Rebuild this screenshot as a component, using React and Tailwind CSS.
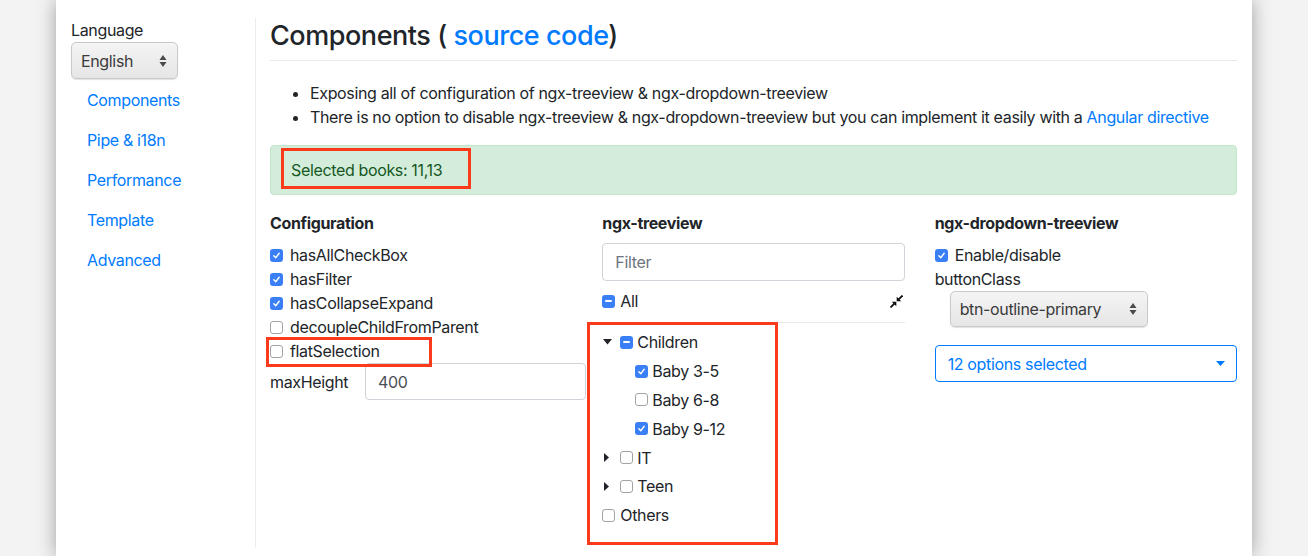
import React from 'react';

const FONT = { fontFamily: 'Inter, "Liberation Sans", sans-serif' };

function Check({ state = 'off' }) {
  if (state === 'on') {
    return (
      <span className="inline-flex items-center justify-center w-[13px] h-[13px] rounded-[3px] bg-[#3a7ff6] shrink-0">
        <svg width="9" height="9" viewBox="0 0 10 10">
          <path d="M2 5.2 L4.2 7.5 L8 2.5" fill="none" stroke="#fff" strokeWidth="1.5" strokeLinecap="round" strokeLinejoin="round" />
        </svg>
      </span>
    );
  }
  if (state === 'mixed') {
    return (
      <span className="inline-flex items-center justify-center w-[13px] h-[13px] rounded-[3px] bg-[#3a7ff6] shrink-0">
        <span className="block w-[7px] h-[2px] bg-white rounded-sm" />
      </span>
    );
  }
  return <span className="inline-block w-[13px] h-[13px] rounded-[3px] border border-[#a3a3a3] bg-white shrink-0" />;
}

function Caret({ dir }) {
  return dir === 'down' ? (
    <svg width="9" height="6" viewBox="0 0 9 6" className="shrink-0"><path d="M0 0 H9 L4.5 5.5 Z" fill="#212529" /></svg>
  ) : (
    <svg width="6" height="9" viewBox="0 0 6 9" className="shrink-0"><path d="M0 0 V9 L5 4.5 Z" fill="#212529" /></svg>
  );
}

function UpDown() {
  return (
    <svg width="8" height="14" viewBox="0 0 8 14">
      <path d="M4 1 L7.5 6 H0.5 Z" fill="#4a4a4a" />
      <path d="M4 13 L7.5 8 H0.5 Z" fill="#4a4a4a" />
    </svg>
  );
}

function MacSelect({ label, className }) {
  return (
    <div className={`flex items-center justify-between rounded-[5px] border border-[#c9c9c9] bg-gradient-to-b from-[#f4f4f4] to-[#e6e6e6] shadow-[0_1px_1px_rgba(0,0,0,0.12)] pl-[9px] pr-[10px] text-[#3a3a3a] ${className}`}>
      <span>{label}</span>
      <UpDown />
    </div>
  );
}

const CONFIG = [
  ['hasAllCheckBox', 'on'],
  ['hasFilter', 'on'],
  ['hasCollapseExpand', 'on'],
  ['decoupleChildFromParent', 'off'],
  ['flatSelection', 'off'],
];

export default function App() {
  return (
    <div style={FONT} className="w-[1308px] h-[556px] overflow-hidden bg-[#f3f3f3] flex justify-center text-[16px] tracking-[-0.35px] text-[#212529]">
      <div className="w-[1196px] h-full bg-white shadow-[0_0_18px_rgba(0,0,0,0.35)] flex pt-[18px]">
        {/* Sidebar */}
        <aside className="w-[200px] h-[530px] border-r border-[#ececec] pl-[15px] shrink-0">
          <div className="leading-6">Language</div>
          <MacSelect label="English" className="w-[107px] h-[37px]" />
          <nav className="flex flex-col text-[#007bff] mt-px">
            {['Components', 'Pipe & i18n', 'Performance', 'Template', 'Advanced'].map(n => (
              <a key={n} className="px-4 py-2 leading-6">{n}</a>
            ))}
          </nav>
        </aside>

        {/* Main */}
        <main className="flex-1 pl-[14px] pr-[15px]">
          <h3 className="text-[27px] font-medium leading-[35px] tracking-[-0.45px]">
            Components ( <a className="text-[#007bff]">source code</a>)
          </h3>
          <hr className="mt-[7px] border-[#e9e9e9]" />
          <ul className="list-disc pl-10 mt-[20px] leading-6">
            <li>Exposing all of configuration of ngx-treeview &amp; ngx-dropdown-treeview</li>
            <li>
              There is no option to disable ngx-treeview &amp; ngx-dropdown-treeview but you can implement it easily with a{' '}
              <a className="text-[#007bff]">Angular directive</a>
            </li>
          </ul>

          <div className="relative mt-4 h-[50px] rounded-[4px] border border-[#c3e6cb] bg-[#d4edda] text-[#155724] px-5 flex items-center">
            Selected books: 11,13
            <span className="absolute left-[10px] top-[2px] w-[190px] h-[41px] border-[3px] border-[#fc3a1c]" />
          </div>

          <div className="grid grid-cols-3 gap-x-[30px] mt-4">
            {/* Configuration */}
            <div>
              <h6 className="font-bold leading-6 mb-2">Configuration</h6>
              <div className="flex flex-col">
                {CONFIG.map(([name, st]) => (
                  <label key={name} className="relative flex items-center gap-[7px] h-6">
                    <Check state={st} />
                    <span>{name}</span>
                    {name === 'flatSelection' && (
                      <span className="absolute left-[-4px] top-[-2px] w-[166px] h-[30px] border-[3px] border-[#fc3a1c]" />
                    )}
                  </label>
                ))}
              </div>
              <div className="flex items-center">
                <span className="w-[95px] shrink-0">maxHeight</span>
                <div className="w-[221px] h-[37px] shrink-0 rounded-[4px] border border-[#ced4da] flex items-center px-3 text-[#495057]">400</div>
              </div>
            </div>

            {/* ngx-treeview */}
            <div>
              <h6 className="font-bold leading-6 mb-2">ngx-treeview</h6>
              <div className="h-[38px] rounded-[4px] border border-[#ced4da] flex items-center px-3 text-[#6c757d]">Filter</div>
              <div className="flex items-center justify-between mt-2 h-6">
                <label className="flex items-center gap-[5px]"><Check state="mixed" /><span>All</span></label>
                <svg width="13" height="13" viewBox="0 0 12 12" className="mr-[2px]">
                  <path d="M11.5 0.5 L7.8 4.2" stroke="#111" strokeWidth="1.7" />
                  <path d="M6.2 1.6 V5.8 H10.4 Z" fill="#111" />
                  <path d="M0.5 11.5 L4.2 7.8" stroke="#111" strokeWidth="1.7" />
                  <path d="M1.6 6.2 H5.8 V10.4 Z" fill="#111" />
                </svg>
              </div>
              <hr className="mt-[9px] border-[#e9e9e9]" />
              <div className="relative pt-[5px]">
                <span className="absolute left-[-15px] top-[-1px] w-[191px] h-[223px] border-[3px] border-[#fc3a1c]" />
                <div className="flex items-center h-[28.8px]">
                  <span className="w-[18px] flex pl-[1px]"><Caret dir="down" /></span>
                  <Check state="mixed" /><span className="ml-[4px]">Children</span>
                </div>
                {[['Baby 3-5', 'on'], ['Baby 6-8', 'off'], ['Baby 9-12', 'on']].map(([n, s]) => (
                  <div key={n} className="flex items-center h-[28.8px] pl-[33px]">
                    <Check state={s} /><span className="ml-[4px]">{n}</span>
                  </div>
                ))}
                {['IT', 'Teen'].map(n => (
                  <div key={n} className="flex items-center h-[28.8px]">
                    <span className="w-[18px] flex pl-[2px]"><Caret dir="right" /></span>
                    <Check /><span className="ml-[4px]">{n}</span>
                  </div>
                ))}
                <div className="flex items-center h-[28.8px]">
                  <Check /><span className="ml-[5px]">Others</span>
                </div>
              </div>
            </div>

            {/* ngx-dropdown-treeview */}
            <div>
              <h6 className="font-bold leading-6 mb-2">ngx-dropdown-treeview</h6>
              <label className="flex items-center gap-[7px] h-6"><Check state="on" /><span>Enable/disable</span></label>
              <div className="leading-6">buttonClass</div>
              <MacSelect label="btn-outline-primary" className="ml-[15px] w-[198px] h-[36px]" />
              <div className="mt-[18px] h-[37px] rounded-[4px] border border-[#007bff] text-[#007bff] flex items-center justify-between pl-3 pr-[11px]">
                <span>12 options selected</span>
                <svg width="9" height="5" viewBox="0 0 9 5"><path d="M0 0 H9 L4.5 5 Z" fill="#007bff" /></svg>
              </div>
            </div>
          </div>
        </main>
      </div>
    </div>
  );
}
